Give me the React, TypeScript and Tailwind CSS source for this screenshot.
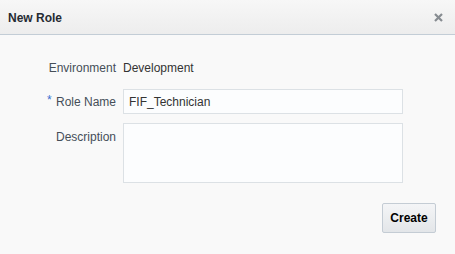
import React from "react";

export default function App() {
  return (
    <div className="w-[455px] h-[254px] bg-[#f9f9f9] flex flex-col" style={{ fontFamily: '"Liberation Sans", Arial, sans-serif' }}>
      <div className="h-[35px] flex items-center justify-between pl-2 pr-[12px] bg-gradient-to-b from-[#f7f7f7] to-[#ededed] border-b border-[#c3cdd6] shrink-0">
        <span className="text-[12px] font-bold text-[#262b33] leading-4 mt-[1px]">New Role</span>
        <svg width="9" height="9" viewBox="0 0 9 9" className="mt-[1px]">
          <path d="M1 1 L8 8 M8 1 L1 8" stroke="#878c91" strokeWidth="2.2" strokeLinecap="butt" />
        </svg>
      </div>
      <div className="flex flex-col pt-[25px] text-[12px] leading-4">
        <div className="flex items-center">
          <div className="w-[116px] text-right text-[#454e58]">Environment</div>
          <div className="ml-[7px] text-[#333]">Development</div>
        </div>
        <div className="flex items-center mt-[13px]">
          <div className="w-[116px] text-right text-[#454e58] relative">
            <span className="text-[#3a6fd0] absolute left-[47px] -top-[2px] text-[12px]">*</span>
            Role Name
          </div>
          <div className="ml-[7px] w-[280px] h-[25px] border border-[#dce1e5] bg-[#fcfdfe] flex items-center px-[5px] text-[#333]">FIF_Technician</div>
        </div>
        <div className="flex items-start mt-[9px]">
          <div className="w-[116px] text-right text-[#454e58] pt-[6px]">Description</div>
          <div className="ml-[7px] w-[280px] h-[60px] border border-[#dce1e5] bg-[#fcfdfe]" />
        </div>
        <div className="flex justify-end mt-[20px] pr-[19px]">
          <button className="w-[54px] h-[30px] border border-[#c4ccd4] rounded-[2px] bg-gradient-to-b from-[#f4f5f7] to-[#e3e6e9] text-[12px] font-bold text-black">Create</button>
        </div>
      </div>
    </div>
  );
}
